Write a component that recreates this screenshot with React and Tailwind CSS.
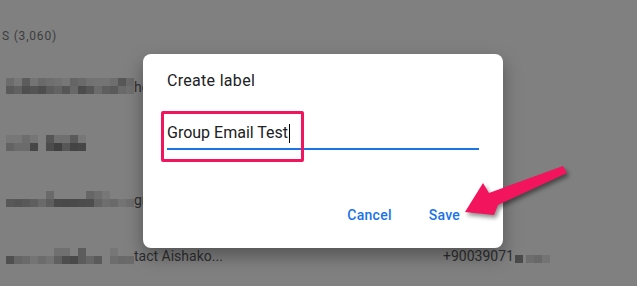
const rows = [
  {
    top: ["#6c6c6c", "#777777", "#5c5c5c", "#747474", "#6a6a6a", "#6f6f6f", "#727272", "#777777", "#656565", "#6a6a6a", "#727272", "#747474", "#747474", "#6e6e6e", "#575757", "#6a6a6a"],
    bottom: ["#5a5a5a", "#616161", "#4f4f4f", "#545454", "#4e4e4e", "#5c5c5c", "#636363", "#565656", "#686868", "#4c4c4c", "#565656", "#6b6b6b", "#5e5e5e", "#5a5a5a", "#6a6a6a", "#707070"],
    text: "hcl",
  },
  {
    top: ["#777777", "#777777", "#6d6d6d", "#767676", null, "#555555", "#6f6f6f", "#6f6f6f", "#5a5a5a", "#777777"],
    bottom: ["#636363", "#6b6b6b", "#6b6b6b", "#474747", null, "#4c4c4c", "#404040", "#575757", "#444444", "#474747"],
    text: "",
  },
  {
    top: [null, null, null, null, null, "#6a6a6a", null, null, null, null, "#666666", "#6e6e6e", "#777777", null, null, null],
    bottom: ["#585858", "#555555", "#595959", "#5f5f5f", "#6a6a6a", "#5e5e5e", "#4a4a4a", "#494949", "#4a4a4a", "#4c4c4c", "#4d4d4d", "#646464", "#6e6e6e", "#6a6a6a", "#747474", "#6f6f6f"],
    text: "group",
  },
  {
    top: [null, null, null, null, null, null, "#707070", "#707070", null, "#5c5c5c", null, null, null, "#777777", null, null],
    bottom: ["#505050", "#666666", "#6a6a6a", "#747474", "#6c6c6c", "#737373", "#606060", "#4d4d4d", "#494949", "#5c5c5c", "#666666", "#5a5a5a", null, "#6d6d6d", "#696969", "#6b6b6b"],
    text: "tact Aishako...",
  },
];

const Mosaic = ({ top, bottom }) => (
  <div className="flex flex-col w-[128px]">
    <div className="flex h-[8px]">
      {top.map((c, i) => (
        <div key={i} className="w-[8px] h-[8px]" style={{ background: c || "transparent" }} />
      ))}
    </div>
    <div className="flex h-[8px]">
      {bottom.map((c, i) => (
        <div key={i} className="w-[8px] h-[8px]" style={{ background: c || "transparent" }} />
      ))}
    </div>
  </div>
);

const App = () => {
  return (
    <div className="relative w-[637px] h-[286px] overflow-hidden bg-[#808080] font-['Roboto','Liberation_Sans',sans-serif]">
      {/* dimmed contact list behind the dialog */}
      <div className="pt-[28px]">
        <p className="pl-[2px] text-[12px] leading-4 tracking-[0.8px] text-[#3c3d3e]">
          S (3,060)
        </p>
        <div className="mt-[14px] flex flex-col">
          {rows.map((row, i) => (
            <div key={i} className="relative flex items-center h-[56.5px] pl-[6px]">
              <Mosaic top={row.top} bottom={row.bottom} />
              <span className="text-[14px] text-[#2e2f30] leading-5 mt-[1px]">{row.text}</span>
              {i === 3 && (
                <div className="absolute left-[443px] top-0 h-full flex items-center">
                  <span className="text-[14px] text-[#2e2f30] leading-5 mt-[1px]">+90039071</span>
                  <div className="ml-[1px] mt-[6px] flex h-[8px]">
                    <div className="w-[8px] h-[8px] bg-[#4a4a4a]" />
                    <div className="w-[3px]" />
                    <div className="w-[8px] h-[8px] bg-[#6d6d6d]" />
                    <div className="w-[8px] h-[8px] bg-[#686868]" />
                    <div className="w-[8px] h-[8px] bg-[#747474]" />
                  </div>
                </div>
              )}
            </div>
          ))}
        </div>
      </div>

      {/* dialog */}
      <div className="absolute left-[143px] top-[54px] w-[360px] h-[194px] rounded-[8px] bg-white shadow-[0_8px_18px_rgba(0,0,0,0.35)]">
        <div className="pt-[15px] px-[24px]">
          <h2 className="text-[16px] leading-6 text-[#202124] tracking-[0.3px]">Create label</h2>
          <div className="mt-[28px]">
            <div className="flex items-center h-6 text-[16px] text-[#202124]">
              <span>Group Email Test</span>
              <span className="ml-[1px] w-px h-[19px] bg-black" />
            </div>
            <div className="mt-[3px] h-[2px] bg-[#1a73e8]" />
          </div>
        </div>
        <div className="mt-[47px] flex justify-end gap-[13px] pr-[31px]">
          <button className="h-9 px-3 text-[14px] font-medium tracking-[0.25px] text-[#1a73e8]">Cancel</button>
          <button className="h-9 px-3 text-[14px] font-medium tracking-[0.25px] text-[#1a73e8]">Save</button>
        </div>
        {/* annotation box */}
        <div className="absolute left-[18px] top-[57px] w-[143px] h-[51px] border-[3px] border-[#f2145c] rounded-[2px]" />
      </div>

      {/* annotation arrow */}
      <svg className="absolute left-0 top-0 pointer-events-none drop-shadow-[2px_3px_2px_rgba(0,0,0,0.45)]" width="637" height="286" viewBox="0 0 637 286">
        <polygon
          points="465,212 483,183 489,193 563,166 567,173 498,205 494,215"
          fill="#f2145c"
        />
      </svg>
    </div>
  );
};

export default App;
